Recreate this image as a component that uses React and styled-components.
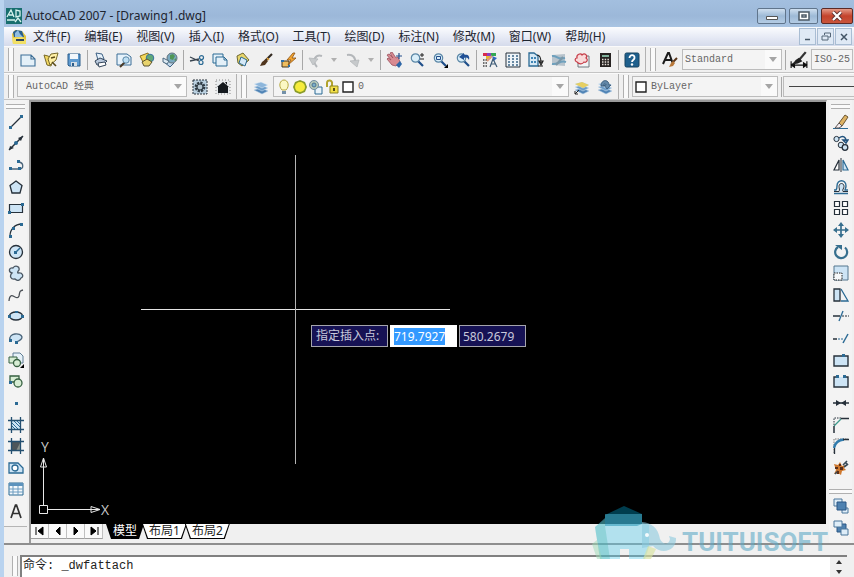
import React, { useEffect, useRef } from 'react';
import styled, { createGlobalStyle } from 'styled-components';

const menus = ['文件(F)', '编辑(E)', '视图(V)', '插入(I)', '格式(O)', '工具(T)', '绘图(D)', '标注(N)', '修改(M)', '窗口(W)', '帮助(H)'];

const B = '#2b6a94';
const L = '#cde4f5';
const K = '#26303a';

// standard toolbar, "|" is a separator and "v" a small drop arrow
const standardTools = [
    'new', 'open', 'save', '|', 'print', 'preview', 'publish', 'globe', '|',
    'cut', 'copy', 'paste', 'brush', 'matchBlock', '|', 'undo', 'v', 'redo', 'v', '|',
    'pan', 'zoomRealtime', 'zoomWindow', 'zoomPrevious', '|',
    'properties', 'designCenter', 'toolPalettes', 'sheetSet', 'markup', 'calculator', '|', 'help',
];

const drawTools = [
    'line', 'xline', 'polyline', 'polygon', 'rectangle', 'arc', 'circle', 'cloud', 'spline', 'ellipse',
    'ellipseArc', 'insertBlock', 'makeBlock', 'point', 'hatch', 'gradient', 'region', 'table', 'text',
];

const modifyTools = [
    'erase', 'copyObject', 'mirror', 'offset', 'array', 'move', 'rotate', 'scale', 'stretch',
    'trim', 'extend', 'breakPoint', 'break', 'join', 'chamfer', 'fillet', 'explode',
];

const orderTools = ['front', 'back'];

const lens = (
    <>
        <path d="M9 9l5 5" stroke="#1f4f8a" strokeWidth="2.2" />
        <circle cx="6.5" cy="6" r="4.2" fill="#d9eef9" stroke="#5b87a6" strokeWidth="1.2" />
    </>
);

const layers = (
    <>
        <path d="M1 11l7-2 7 3-6 3z" fill="#4f83b5" stroke="#b8d0e6" strokeWidth=".5" />
        <path d="M1 8l7-2 7 3-6 3z" fill="#6b9cc9" stroke="#d5e3f0" strokeWidth=".5" />
        <path d="M1 5l7-2 7 3-6 3z" fill="#8db6db" stroke="#e5eef6" strokeWidth=".5" />
    </>
);

const frameHash = <path d="M3.5 0v16M12.5 0v16M0 3.5h16M0 12.5h16" stroke="#234f70" strokeWidth="1.3" />;

const icons = {
    app: (
        <>
            <rect width="16" height="16" fill="#176e6e" />
            <path d="M1 9l4-7 3 7M3 7h4M10 2v7l4-1V3zM1 12h8M9 14l3-4 3 4" fill="none" stroke="#d8f3ee" strokeWidth="1.3" />
        </>
    ),
    doc: (
        <>
            <path d="M1 5l3-4 7 1 4 5v8H2z" fill="#e3c53c" />
            <path d="M2 3l3-2 6 1 2 6H3z" fill="#285e8e" />
            <path d="M4 4l3-3 2 4 3 3H4z" fill="#8fbde0" />
            <path d="M1 9l10-1 4 3v4H2z" fill="#f1df66" />
            <path d="M5 10h8v2H5z" fill="#2b435f" />
        </>
    ),
    new: <path d="M1 3h10l4 4v7H1zM11 3v4h4" fill="#e4f0f8" stroke="#3d6f97" strokeWidth="1.1" />,
    open: (
        <>
            <path d="M1 3l4 1 5 3-2 7-4-1z" fill="#f3d862" stroke="#77692a" />
            <path d="M5 7l3-5 7-1-2 7-6 5z" fill="#fff0a6" stroke="#77692a" />
            <path d="M8 6l4-1M9 10l4 4" stroke="#5c4c1a" strokeWidth="1.600" />
        </>
    ),
    save: (
        <>
            <path d="M2 2h12v12H3l-1-1z" fill="#5f9bd0" stroke="#2b5c8a" />
            <path d="M4 2h8v5H4z" fill="#f3f8fc" />
            <path d="M5 10h6v4H5z" fill="#d6dfe6" />
            <path d="M6 11h2v3H6z" fill="#2b5c8a" />
        </>
    ),
    print: (
        <>
            <path d="M3 1l6 1 2 5-6 1z" fill="#e6f2fb" stroke="#3f6285" />
            <path d="M2 9l5-3 7 3-4 4H4z" fill="#b9c9dd" stroke="#34465a" />
            <path d="M5 11l7-1 1 3-7 2z" fill="#fff" stroke="#34465a" />
        </>
    ),
    preview: (
        <>
            <path d="M1 2h10l4 3v8H1z" fill="#e6f2fb" stroke="#3d6f97" />
            <path d="M9 10l-5 5" stroke="#4a3a28" strokeWidth="2" />
            <circle cx="10" cy="8" r="3.200" fill="#bfe0f4" stroke="#5b87a6" />
        </>
    ),
    publish: (
        <>
            <path d="M1 4l8-3 2 6-7 3z" fill="#f5d95a" stroke="#8a6f22" />
            <circle cx="11" cy="6" r="3.800" fill="#5fa878" stroke="#3872a0" />
            <path d="M3 10l5-3 5 3-3 4H5z" fill="#e8d36c" stroke="#5b5330" />
        </>
    ),
    globe: (
        <>
            <path d="M1 9l7 6 4-4" fill="#bed6e9" stroke="#3f6285" />
            <circle cx="10" cy="6" r="5" fill="#79a9bf" stroke="#62727d" />
            <path d="M8 3l3-1 2 2-2 4-3-1zM12 8l2-2v3z" fill="#4f9656" />
            <path d="M1 6l6 3-2 3-4-2z" fill="#dce9f2" stroke="#4c6980" />
        </>
    ),
    cut: (
        <>
            <path d="M1 5l9 4M1 9l9-2" stroke="#38444f" strokeWidth="1.3" />
            <circle cx="12.5" cy="5.6" r="2" fill="none" stroke={B} strokeWidth="1.2" />
            <circle cx="12" cy="10.5" r="2" fill="none" stroke={B} strokeWidth="1.2" />
        </>
    ),
    copy: (
        <>
            <path d="M1 2h10v9H1z" fill="#e4f0f8" stroke={B} />
            <path d="M4 5h8l3 3v6H4zM12 5v3h3" fill="#e4f0f8" stroke={B} />
        </>
    ),
    paste: (
        <>
            <path d="M2 4l6-3 6 7-7 6-4-3z" fill="#e8d66b" stroke="#6f6830" />
            <path d="M6 5l6 3-2 6-6-3z" fill="#d5e9f7" stroke={B} />
        </>
    ),
    brush: (
        <>
            <path d="M14 2l-7 7" stroke="#332a20" strokeWidth="2.2" />
            <path d="M8 7l2 2-3 4-5 1 2-4z" fill="#50351d" />
            <path d="M9 6l2 2" stroke="#e5a43a" strokeWidth="1.6" />
        </>
    ),
    matchBlock: (
        <>
            <path d="M1 9h7v6H1z" fill="#efbd5e" stroke="#3e3423" />
            <path d="M12 1L6 8h4l-3 5 8-7h-4l3-5z" fill="#f2a531" stroke="#8c5215" strokeWidth=".8" />
            <path d="M0 8h3v2H0zM7 13h2v2H7z" fill="#2b6fa8" />
        </>
    ),
    undo: (
        <>
            <path d="M9 15C3 8 8 2 14 4" stroke="#b4b7ba" strokeWidth="2" />
            <path d="M1 6l9 1-5 6z" fill="#c6c9cb" stroke="#b4b7ba" strokeWidth=".8" />
        </>
    ),
    redo: (
        <>
            <path d="M2 3c6-1 9 3 8 8" stroke="#b4b7ba" strokeWidth="2" />
            <path d="M5 9l9-1-2 7z" fill="#c6c9cb" stroke="#b4b7ba" strokeWidth=".8" />
        </>
    ),
    pan: (
        <>
            <path d="M1 3l2-1 4 4-3-5 2-1 4 6 2-1 2 5-4 4-4-1-5-6 1-1 3 2z" fill="#d88a91" stroke="#9b4f5c" strokeWidth=".8" />
            <path d="M13 1v6M10 4h6" stroke="#254f8c" strokeWidth="1.2" />
            <path d="M10 13l4-4 2 3-3 4z" fill="#2e67a7" />
        </>
    ),
    zoomRealtime: <>{lens}<path d="M13 1v4M11 3h4M11 7h4" stroke="#222" /></>,
    zoomWindow: <>{lens}<path d="M4.500 4.500h4v3h-4z" fill="none" stroke="#254f8c" /><path d="M16 12v4h-4z" fill="#000" /></>,
    zoomPrevious: <>{lens}<path d="M4 5l5-4v2c4-1 6 1 5 5-1-2-2-3-5-2v2z" fill="#204f95" /></>,
    properties: (
        <>
            <path d="M1 1h4v3H1z" fill="#d62b4d" />
            <path d="M5 1h4v3H5z" fill="#8c3fc2" />
            <path d="M9 1h5v3H9z" fill="#34a853" />
            <path d="M4 4h5v3H4z" fill="#eab72d" />
            <path d="M10 4l5 2-3 3z" fill="#3268c5" />
            <path d="M1 8h4M1 11h4M1 14h4" stroke="#444" strokeWidth="1.4" strokeDasharray="1.500 1" />
            <path d="M8 15l3-8 4 8M9 12h5" stroke="#3c5a75" strokeWidth="1.2" fill="none" />
            <path d="M5 9l5-5" stroke="#dd9a7c" strokeWidth="2" />
        </>
    ),
    designCenter: (
        <>
            <path d="M1 1h14v14H1z" fill="#eef4f8" stroke={K} />
            <path d="M3 4h2m2 0h2m2 0h2M3 7h2m2 0h2m2 0h2M3 10h2m2 0h2m2 0h2M3 13h2m2 0h2m2 0h2" stroke="#3b6686" strokeWidth="1.700" />
        </>
    ),
    toolPalettes: (
        <>
            <path d="M1 1h5l4 3v10H1z" fill="#d6e8f4" stroke={B} strokeWidth="1.300" />
            <path d="M3 5h2v2H3zM6 5h2v2H6zM3 9h2v2H3zM6 9h2v2H6z" fill="#3f85b5" />
            <path d="M9 3c3 0 4 3 4 8M11 9h4l-2 4z" stroke="#222" strokeWidth="1.200" />
            <path d="M10 14h5" stroke="#222" />
        </>
    ),
    sheetSet: (
        <>
            <path d="M1 3l13-1v12L1 13z" fill="#b7c3cc" />
            <path d="M1 4c5-1 5 4 13 2M1 12c6 1 8-4 14-2" stroke="#6da0bd" strokeWidth="2" fill="none" />
            <path d="M5 13l7-8" stroke="#7c98a8" strokeWidth="2" />
        </>
    ),
    markup: (
        <>
            <path d="M4 4h11v11H4z" fill="#f1f4f6" stroke="#71787e" />
            <path d="M3 10c-3-1-2-4 0-4-1-4 4-5 5-3 3-3 6 1 4 3 3 2 0 5-2 4-2 3-5 2-7 0z" fill="#f9dada" stroke="#c63d48" strokeWidth="1.2" />
        </>
    ),
    calculator: (
        <>
            <path d="M3 1h11v14H3z" fill="#262220" />
            <path d="M5 3h7v2H5z" fill="#7fb09a" />
            <path d="M5 7.500h7M5 10h7M5 12.500h7" stroke="#e7e1db" strokeWidth="1.5" strokeDasharray="1.500 1.200" />
        </>
    ),
    help: (
        <>
            <rect x="1" y="1" width="14" height="14" rx="1.500" fill="#1f608d" stroke="#164361" />
            <path d="M5.500 6c0-4 5.500-3.500 5 0-.3 2-2.500 2-2.500 4" fill="none" stroke="#fff" strokeWidth="1.800" />
            <circle cx="8" cy="12.500" r="1.200" fill="#fff" />
        </>
    ),
    textStyle: (
        <>
            <path d="M1 12L6 1h1l4 11M3 8h6" fill="none" stroke="#1b1b1b" strokeWidth="2" />
            <path d="M15 6l-4 4" stroke="#5a3418" strokeWidth="2" />
            <path d="M11 9l2 2-2 3-4 1 2-4z" fill="#b87839" />
        </>
    ),
    dimStyle: (
        <>
            <path d="M1 9v6M15 9v6M1 12.500h14M1 12.500l3-2v4zM15 12.500l-3-2v4z" fill="#111" stroke="#111" />
            <path d="M14 1L8 8" stroke="#333" strokeWidth="2" />
            <path d="M8 6l3 3-4 2-5 1 3-4z" fill="#222" />
        </>
    ),
    gear: (
        <>
            <path d="M1 1h14v14H1z" fill="#b9cfdf" stroke={K} strokeDasharray="2 1" />
            <circle cx="8" cy="8" r="4" fill="none" stroke="#303c45" strokeWidth="2.800" strokeDasharray="2.100 1" />
            <circle cx="8" cy="8" r="3" fill="#b4c6d2" stroke="#303c45" strokeWidth="1.200" />
        </>
    ),
    home: (
        <>
            <path d="M1 1h14v14H1z" fill="#e8ebed" stroke="#888" strokeDasharray="1 2" />
            <path d="M2 8l6-5 6 5h-1v6H3V8z" fill="#14191e" />
            <path d="M10 3h2v3" fill="#14191e" />
        </>
    ),
    layers,
    layerCurrent: <>{layers}<path d="M1 5l7-2 7 3-6 3z" fill="#e6cf62" /><path d="M1 15l4-4M1 12v3h3" fill="none" stroke="#222" /></>,
    layerPrevious: <>{layers}<path d="M4 7c0-7 8-7 8-1h2l-4 4-3-4h2c0-2-3-2-2 1z" fill="#6287a8" stroke="#365775" strokeWidth=".8" /></>,
    bulb: (
        <>
            <path d="M6 11C2 7 4 1 8 1s6 6 2 10z" fill="#fbf8c4" stroke="#b5a83f" />
            <path d="M6 12h4v3H6z" fill="#7390a8" />
        </>
    ),
    sun: (
        <>
            <path d="M8 1l5 2 2 5-2 5-5 2-5-2-2-5 2-5z" fill="#8a9c2a" />
            <circle cx="8" cy="8" r="5" fill="#f6ec3b" />
        </>
    ),
    freeze: (
        <>
            <path d="M7 8h7v7H7z" fill="#e9f3fa" stroke={B} />
            <circle cx="6" cy="6" r="4.500" fill="#b5c9b8" stroke="#748da2" />
            <circle cx="6" cy="6" r="2" fill="#7bb0cb" stroke="#4f7390" />
        </>
    ),
    unlock: (
        <>
            <path d="M3 8V4c0-4 6-3 5 1v3" fill="none" stroke="#b1a32c" strokeWidth="2" />
            <path d="M6 7h8v7H6z" fill="#f2e047" stroke="#8d8424" />
            <path d="M10 9v3" stroke="#575019" strokeWidth="2" />
        </>
    ),
    swatch: <path d="M3 3h10v10H3z" fill="#fff" stroke="#222" strokeWidth="1.400" />,
    line: <><path d="M2 14L14 2" stroke={K} strokeWidth="1.200" /><path d="M1 12h3v3H1zM12 1h3v3h-3z" fill={B} /></>,
    xline: <><path d="M1 15L15 1" stroke={K} strokeWidth="1.500" /><path d="M2 11l4 2-5 2zM10 3l5-2-2 5z" fill={K} /><circle cx="8" cy="8" r="2" fill={B} /></>,
    polyline: <><path d="M2 12h9c5 0 5-6 0-7" fill="none" stroke="#4a647a" strokeWidth="1.300" /><path d="M1 10h3v3H1zM10 10h3v3h-3zM9 3h3v3H9z" fill={B} /></>,
    polygon: <path d="M8 2l6 4.500L12 14H4L2 6.500z" fill={L} stroke={K} strokeWidth="1.300" />,
    rectangle: <><path d="M1.500 4.500h13v8h-13z" fill={L} stroke={K} strokeWidth="1.200" /><path d="M0 11h3v3H0zM13 3h3v3h-3z" fill={B} /></>,
    arc: <><path d="M2 14C2 7 7 2 14 2" fill="none" stroke={K} strokeWidth="1.300" /><path d="M1 13h3v3H1zM4 5h3v3H4zM12 1h3v3h-3z" fill={B} /></>,
    circle: <><circle cx="8" cy="8" r="6.500" fill={L} stroke={K} strokeWidth="1.300" /><path d="M8 8l4-4" stroke={B} strokeWidth="1.500" /><path d="M6 7h3v3H6z" fill={B} /></>,
    cloud: <path d="M4 8C0 7 1 2 5 3c2-3 7-2 6 2-1 1-2 2-1 3 5-1 6 4 3 5-2 4-5 2-6 1-4 1-6-3-3-6z" fill={L} stroke="#4a5662" strokeWidth="1.300" />,
    spline: <path d="M1 14c1-12 8 1 10-5 1-4 0-5 4-6" fill="none" stroke="#4a4f55" strokeWidth="1.300" />,
    ellipse: <><ellipse cx="8" cy="8" rx="6.500" ry="4" fill={L} stroke={K} strokeWidth="1.300" /><path d="M0 7h3v3H0zM13 7h3v3h-3zM7 3h3v2H7z" fill={B} /></>,
    ellipseArc: <><path d="M2 10C0 3 13 2 14 7c0 3-3 4-6 5" fill={L} stroke="#4a647a" strokeWidth="1.300" /><path d="M1 9h3v3H1zM7 11h3v3H7z" fill={B} /></>,
    insertBlock: (
        <>
            <path d="M5 1h7l3 3v7H5z" fill="#e6f1f8" stroke="#5e7d94" />
            <path d="M1 5h8v6H1z" fill="#d7edd4" stroke="#366040" />
            <circle cx="9" cy="11" r="3.500" fill="#d7edd4" stroke="#366040" strokeWidth="1.300" />
            <path d="M16 12v4h-4z" fill="#000" />
        </>
    ),
    makeBlock: <><path d="M2 3h9v6H2z" fill="#d7edd4" stroke="#366040" strokeWidth="1.300" /><circle cx="10" cy="10" r="4" fill="#d7edd4" stroke="#366040" strokeWidth="1.300" /><path d="M1 8h3v3H1z" fill={B} /></>,
    point: <path d="M7 7h3v3H7z" fill={B} />,
    hatch: <><path d="M4 4h8v8H4z" fill={L} /><path d="M4 6l6 6M6 4l6 6M4 9l3 3M9 4l3 3" stroke={B} />{frameHash}</>,
    gradient: <><path d="M3 3h10v10H3z" fill="#4d565a" /><path d="M13 3v10H8z" fill="#8a8f87" />{frameHash}</>,
    region: <><path d="M1 3h9l5 5v5H1z" fill={L} stroke={B} strokeWidth="1.300" /><circle cx="7" cy="8" r="3" fill="#fff" stroke={B} strokeWidth="1.300" /></>,
    table: <><path d="M1 2h14v12H1z" fill="#f5f9fc" stroke={B} /><path d="M1 2h14v3H1z" fill="#5d93bd" /><path d="M1 8h14M1 11h14M5 5v9M10 5v9" stroke="#6d9cc0" /></>,
    text: <path d="M3 15L7.500 2h1L13 15M5 10.500h6" fill="none" stroke="#333" strokeWidth="1.700" />,
    erase: <><path d="M0 14.500h15" stroke={B} /><path d="M6 9l6-8 3 2-6 9z" fill="#ddb263" stroke="#6b5631" /><path d="M6 9l3 3-3 2H2z" fill="#f6eef0" stroke="#5a5352" /></>,
    copyObject: (
        <>
            <circle cx="3.500" cy="4" r="2.600" fill={L} stroke={K} />
            <circle cx="8" cy="10" r="2.800" fill={L} stroke={K} />
            <circle cx="12" cy="12.500" r="2.800" fill={L} stroke={K} strokeWidth="1.300" />
            <path d="M6 3c4-3 7-1 7 3M10 5h5l-2 3z" fill="none" stroke="#21527d" strokeWidth="1.500" />
        </>
    ),
    mirror: <><path d="M6 3v10H1z" fill="#fff" stroke={K} strokeWidth="1.200" /><path d="M10 3v10h5z" fill={L} stroke={B} strokeWidth="1.200" /><path d="M8 1v14" stroke={K} /></>,
    offset: <><path d="M1 14.500h14M1 11h2c1-1 1-2 1-4 0-7 9-7 9 0 0 2-1 3-1 4h3" fill="none" stroke={B} strokeWidth="1.400" /><path d="M1 12.500h5c1-2 0-3 0-5 0-4 5-4 5 0 0 2-2 3-1 5h5" fill={L} stroke={K} /></>,
    array: <path d="M1.500 1.500h5v5h-5zM9.500 1.500h5v5h-5zM1.500 9.500h5v5h-5zM9.500 9.500h5v5h-5z" fill="#fff" stroke={K} strokeWidth="1.200" />,
    move: <><path d="M8 2v12M2 8h12" stroke="#376f8e" strokeWidth="1.700" /><path d="M8 0l3 4H5zM8 16l3-4H5zM0 8l4-3v6zM16 8l-4-3v6z" fill="#376f8e" /></>,
    rotate: <><path d="M12 3.500A6 6 0 1 1 5 3" fill="none" stroke="#376f8e" strokeWidth="2.200" /><path d="M2 1h7v5z" fill="#376f8e" /></>,
    scale: <><path d="M1 1h14v14H1z" fill={L} stroke="#55778e" /><path d="M1 8h8v7H1z" fill="#f6f8f9" stroke="#222" strokeDasharray="1.500 1" /></>,
    stretch: <><path d="M1 2h6v12H1z" fill={L} stroke={K} strokeWidth="1.300" /><path d="M8 2l7 12H8" fill="none" stroke={B} strokeWidth="1.300" /></>,
    trim: <><path d="M0 8h7" stroke={K} strokeWidth="1.500" /><path d="M9 8h7" stroke={K} strokeDasharray="2 1" /><path d="M6 13l4-10" stroke={B} strokeWidth="1.300" /></>,
    extend: <><path d="M0 9h4" stroke={K} strokeWidth="1.500" /><path d="M5 9h6" stroke={B} strokeDasharray="2 1" /><path d="M10 13l5-9" stroke={B} strokeWidth="1.500" /></>,
    breakPoint: <><path d="M1 4h14v10H1z" fill={L} stroke={K} strokeWidth="1.400" /><path d="M9 2h3v3H9z" fill={B} /></>,
    break: <><path d="M4 4H1v10h14V4h-3" fill={L} stroke={K} strokeWidth="1.400" /><path d="M3 2h3v3H3zM10 2h3v3h-3z" fill={B} /></>,
    join: <><path d="M0 8h16" stroke={K} strokeWidth="1.500" /><path d="M3 5l5 3-5 3zM13 5L8 8l5 3z" fill={K} /></>,
    chamfer: <><path d="M1 9l7-7" stroke="#3d9a8c" strokeWidth="1.300" /><path d="M1 8V1h7" fill="none" stroke={K} strokeDasharray="1.500 1" /><path d="M1 16V9M8 1.500h8" stroke={K} strokeWidth="1.500" /></>,
    fillet: <><path d="M1 15V1h14" fill="none" stroke="#777" strokeDasharray="1.500 1" /><path d="M1 10C2 5 5 2 11 1.500" stroke="#327cad" strokeWidth="2.300" /><path d="M1.500 16v-6M10 1.500h6" stroke={K} strokeWidth="1.300" /></>,
    explode: (
        <>
            <path d="M1 4l4 1 2-3 2 4 3-1-1 3 2 2-4 1-1 4-3-2-4 1 2-4z" fill="#ce782f" />
            <path d="M10 5l4-4M11 7l4-3M12 2l3 3M2 14l3-3" stroke="#394b58" strokeWidth="1.600" />
            <path d="M2 7h3v2H2zM7 7h3v3H7zM4 11h2v3H4zM6 4h2v2H6z" fill="#5a2f19" />
        </>
    ),
    front: <><path d="M1 1h8v7H1zM9 10h6v5H9z" fill="#deedf8" stroke="#4a769b" /><path d="M4 4h9v8H4z" fill="#4e81b0" stroke="#2a5784" /></>,
    back: <><path d="M4 4h9v8H4z" fill="#4e81b0" stroke="#2a5784" /><path d="M1 1h8v6H1zM8 9h7v6H8z" fill="#deedf8" stroke="#4a769b" /></>,
    first: <path d="M4 4v8M6 8l5-4v8z" fill="#000" stroke="#000" />,
    previous: <path d="M6 8l4-4v8z" fill="#000" stroke="#000" />,
    next: <path d="M10 8L6 4v8z" fill="#000" stroke="#000" />,
    last: <path d="M12 4v8M10 8L5 4v8z" fill="#000" stroke="#000" />,
};

const Glyph = ({ name, size = 16 }) => (
    <svg width={size} height={size} viewBox="0 0 16 16" fill="none" aria-hidden="true">{icons[name]}</svg>
);

const Caret = () => (
    <CaretBox><svg width="8" height="5" viewBox="0 0 8 5"><path d="M0 0h8L4 5z" fill="#a5a5a5" /></svg></CaretBox>
);

const ToolButtons = ({ names, size }) => names.map((name, index) => {
    if (name === '|') return <Separator key={index} />;
    if (name === 'v') {
        return (
            <DropButton key={index} aria-label="history">
                <svg width="6" height="4" viewBox="0 0 6 4"><path d="M0 0h6L3 4z" fill="#b0b0b0" /></svg>
            </DropButton>
        );
    }
    return <ToolButton key={index} aria-label={name}><Glyph name={name} size={size} /></ToolButton>;
});

const SideButtons = ({ names }) => names.map((name) => (
    <SideButton key={name} aria-label={name}><Glyph name={name} /></SideButton>
));

const DynamicInput = () => {
    const xRef = useRef(null);

    useEffect(() => {
        xRef.current.focus({ preventScroll: true });
        xRef.current.select();
    }, []);

    return (
        <Prompt>
            <PromptLabel htmlFor="insert-x">指定插入点:</PromptLabel>
            <CoordInput id="insert-x" ref={xRef} defaultValue="719.7927" $active />
            <CoordInput aria-label="Y" defaultValue="580.2679" />
        </Prompt>
    );
};

const Watermark = () => (
    <Brand>
        <svg width="91" height="57" viewBox="0 0 91 57" aria-hidden="true">
            <path d="M14 12l19-9 18 8v10l-5 2H14z" fill="#006f8e" fillOpacity=".55" />
            <path d="M14 15L4 24l5 32h20V46h9v10h16l4-12V22l-7-2v-9H14z" fill="#5ccdec" fillOpacity=".42" />
            <path d="M14 16L4 24l5 32h10l-5-33z" fill="#43b3a8" fillOpacity=".3" />
            <path d="M51 19c10 1 16 6 18 17 3 6 9 6 10 0l-1-3 7 2c1 12-14 18-23 8l-11 2z" fill="#8cc9dd" fillOpacity=".6" />
            <path d="M6 37l-5 4 5 15h5z" fill="#9ed9b5" fillOpacity=".5" />
            <path d="M57 43l8 3-5 10h-8z" fill="#d9e3a0" fillOpacity=".65" />
            <circle cx="56" cy="32" r="2" fill="#f4fbfd" />
        </svg>
        <span>TUITUISOFT</span>
    </Brand>
);

const App = () => (
    <>
        <GlobalStyle />
        <AppWindow>
            <TitleBar>
                <Glyph name="app" />
                <Title>AutoCAD 2007 - [Drawing1.dwg]</Title>
                <CaptionButton aria-label="minimize"><svg width="12" height="8" viewBox="0 0 12 8"><path d="M.5 4.500h11v3H.5z" fill="#fff" stroke="#555" /></svg></CaptionButton>
                <CaptionButton aria-label="maximize"><svg width="12" height="10" viewBox="0 0 12 10"><path d="M1 1h10v8H1zM4 4h4v2H4z" fill="#fff" stroke="#4c5966" strokeWidth="1.500" /></svg></CaptionButton>
                <CaptionButton aria-label="close" $close><svg width="12" height="10" viewBox="0 0 12 10"><path d="M2 1l8 8M10 1L2 9" stroke="#5d3030" strokeWidth="4" /><path d="M2 1l8 8M10 1L2 9" stroke="#fff" strokeWidth="2.200" /></svg></CaptionButton>
            </TitleBar>
            <MenuBar>
                <Glyph name="doc" />
                <MenuList>
                    {menus.map((menu) => <MenuItem key={menu}>{menu}</MenuItem>)}
                </MenuList>
                <MdiButton aria-label="minimize drawing"><svg width="8" height="8"><path d="M1 6.500h5" stroke="#456" strokeWidth="1.500" /></svg></MdiButton>
                <MdiButton aria-label="restore drawing"><svg width="10" height="9" fill="none"><path d="M3.500 3V1h6v4h-2M1 4h6v4H1z" stroke="#567" /></svg></MdiButton>
                <MdiButton aria-label="close drawing"><svg width="8" height="8"><path d="M1 1l6 6M7 1L1 7" stroke="#456" strokeWidth="1.500" /></svg></MdiButton>
            </MenuBar>

            <ToolRow>
                <ToolGroup>
                    <Grip />
                    <ToolButtons names={standardTools} />
                </ToolGroup>
                <ToolGroup $grow>
                    <Grip />
                    <ToolButton aria-label="text style"><Glyph name="textStyle" /></ToolButton>
                    <Combo $width={100}>
                        <select aria-label="text style name"><option>Standard</option></select>
                        <Caret />
                    </Combo>
                    <Separator />
                    <ToolButton aria-label="dimension style"><Glyph name="dimStyle" size={18} /></ToolButton>
                    <Combo $grow>
                        <select aria-label="dimension style name"><option>ISO-25</option></select>
                    </Combo>
                </ToolGroup>
            </ToolRow>
            <ToolRow>
                <ToolGroup>
                    <Grip />
                    <Combo $width={170} $inset={6}>
                        <select aria-label="workspace"><option>AutoCAD 经典</option></select>
                        <Caret />
                    </Combo>
                    <ToolButtons names={['gear', 'home']} />
                </ToolGroup>
                <ToolGroup $grow>
                    <Grip />
                    <ToolButton aria-label="layers"><Glyph name="layers" /></ToolButton>
                    <Combo $grow $inset={2}>
                        {['bulb', 'sun', 'freeze', 'unlock', 'swatch'].map((name) => <Glyph key={name} name={name} />)}
                        <select aria-label="layer"><option>0</option></select>
                        <Caret />
                    </Combo>
                    <ToolButtons names={['layerCurrent', 'layerPrevious']} />
                </ToolGroup>
                <ToolGroup>
                    <Grip />
                    <Combo $width={146}>
                        <Glyph name="swatch" />
                        <select aria-label="color"><option>ByLayer</option></select>
                        <Caret />
                    </Combo>
                    <Separator />
                    <LinetypeButton aria-label="linetype"><hr /></LinetypeButton>
                </ToolGroup>
            </ToolRow>

            <Workspace>
                <SideBar $short>
                    <SideGrip />
                    <SideButtons names={drawTools} />
                </SideBar>
                <DrawingArea>
                    <Canvas>
                        <Crosshair width="309" height="309" viewBox="0 0 309 309">
                            <path d="M0 154.500h309" stroke="#e4e4e4" />
                            <path d="M154.500 0v309" stroke="#b4b4b4" />
                        </Crosshair>
                        <DynamicInput />
                        <UcsIcon width="76" height="90" viewBox="0 -6 76 90">
                            <path d="M5.500 65V18M10 69.500h52M1.500 65.500h8v8h-8zM5.500 18l-3 9h6zM62 69.500l-9-3v6z" fill="none" stroke="#e8e8e8" />
                            <text x="3" y="12">Y</text>
                            <text x="63" y="75">X</text>
                        </UcsIcon>
                    </Canvas>
                    <TabStrip>
                        {['first', 'previous', 'next', 'last'].map((name) => (
                            <TabNav key={name} aria-label={name}><Glyph name={name} /></TabNav>
                        ))}
                        <LayoutTabs>
                            <LayoutTab $active><span>模型</span></LayoutTab>
                            <LayoutTab><span>布局1</span></LayoutTab>
                            <LayoutTab><span>布局2</span></LayoutTab>
                        </LayoutTabs>
                    </TabStrip>
                </DrawingArea>
                <SideBar>
                    <SideGrip />
                    <SideButtons names={modifyTools} />
                    <SideGrip $split />
                    <SideButtons names={orderTools} />
                </SideBar>
            </Workspace>

            <CommandPanel>
                <Grip />
                <CommandInput aria-label="command" defaultValue="命令: _dwfattach" />
                <ScrollButtons>
                    <button aria-label="scroll up"><svg width="6" height="4"><path d="M0 4h6L3 0z" fill="#333" /></svg></button>
                    <button aria-label="scroll down"><svg width="6" height="4"><path d="M0 0h6L3 4z" fill="#333" /></svg></button>
                </ScrollButtons>
            </CommandPanel>
            <Watermark />
        </AppWindow>
    </>
);

const uiFont = '"Noto Sans", "Noto Sans CJK SC", sans-serif';
const monoFont = '"Liberation Mono", "Noto Sans CJK SC", monospace';

const GlobalStyle = createGlobalStyle`
    * {
        box-sizing: border-box;
    }
    body {
        margin: 0;
        font: 12px ${uiFont};
        color: #1d2530;
    }
    button, select, input {
        margin: 0;
        padding: 0;
        border: none;
        background: none;
        border-radius: 0;
        font: inherit;
        color: inherit;
        outline: none;
    }
    svg {
        display: block;
        flex: none;
    }
`;

const AppWindow = styled.div`
    position: relative;
    display: flex;
    flex-direction: column;
    min-height: 100vh;
    border-left: 4px solid #b9d3ef;
    background: #f0f0f0;
    overflow: hidden;
`;

const TitleBar = styled.header`
    display: flex;
    align-items: center;
    gap: 3px;
    height: 27px;
    margin-left: -4px;
    padding: 4px 1px 0 6px;
    background: linear-gradient(#a3bfdf, #9cb8d9 60%, #a9c4e2);
`;

const Title = styled.h1`
    flex: 1;
    margin: 0;
    font-size: 12px;
    font-weight: 400;
    line-height: 18px;
`;

const CaptionButton = styled.button`
    display: flex;
    align-items: center;
    justify-content: center;
    width: ${({ $close }) => ($close ? 32 : 29)}px;
    height: 16px;
    border: 1px solid ${({ $close }) => ($close ? '#5b2a26' : '#60758c')};
    border-radius: 2px;
    background: ${({ $close }) => ($close
        ? 'linear-gradient(#e39a87, #c4432c 50%, #c9553c)'
        : 'linear-gradient(#cfdfef, #9db9d6 50%, #b4cce4)')};
`;

const MenuBar = styled.nav`
    display: flex;
    align-items: center;
    height: 19px;
    padding: 0 2px 0 7px;
    background: linear-gradient(#fbfcfe, #e4e8f4 60%, #d5dbeb);
`;

const MenuList = styled.div`
    display: flex;
    flex: 1;
    gap: 14px;
    padding-left: 6px;
`;

const MenuItem = styled.button`
    line-height: 18px;
    white-space: nowrap;
`;

const MdiButton = styled.button`
    display: flex;
    align-items: center;
    justify-content: center;
    width: 17px;
    height: 17px;
    margin-left: 1px;
    border: 1px solid #a9bdd3;
    background: #dfe9f5;
`;

const ToolRow = styled.div`
    display: flex;
    height: 27px;
    border-top: 1px solid #fafafa;
    border-bottom: 1px solid #c4c4c4;
`;

const ToolGroup = styled.div`
    display: flex;
    flex: ${({ $grow }) => ($grow ? '1 1 0' : 'none')};
    align-items: center;
    min-width: 0;
    padding: 0 2px 0 4px;
    border-right: 1px solid #b2b2b2;

    &:last-child {
        padding-right: 0;
        border-right: none;
    }
`;

const Grip = styled.div`
    flex: none;
    align-self: stretch;
    width: 6px;
    margin: 1px 2px 1px 0;
    border: 1px solid #b0b0b0;
    border-width: 0 1px;
    background: #fafafa;
`;

const ToolButton = styled.button`
    display: flex;
    flex: none;
    align-items: center;
    justify-content: center;
    width: 23px;
    height: 23px;
`;

const DropButton = styled(ToolButton)`
    width: 14px;
`;

const Separator = styled.div`
    flex: none;
    width: 1px;
    height: 20px;
    margin: 0 1px 0 2px;
    background: #a8a8a8;
`;

const Combo = styled.div`
    display: flex;
    flex: ${({ $grow, $width }) => ($grow ? '1 1 0' : `0 0 ${$width}px`)};
    align-items: center;
    min-width: 0;
    height: 21px;
    margin: 0 1px;
    padding-left: ${({ $inset = 0 }) => $inset}px;
    border: 1px solid #bcbcbc;
    background: #f4f4f4;

    select {
        flex: 1;
        min-width: 0;
        height: 19px;
        padding-left: 2px;
        appearance: none;
        font: 10px ${monoFont};
        color: #666;
    }
`;

const CaretBox = styled.span`
    display: flex;
    align-items: center;
    justify-content: center;
    align-self: stretch;
    width: 16px;
    background: #fafafa;
    pointer-events: none;
`;

const LinetypeButton = styled.button`
    width: 71px;
    height: 21px;
    padding: 0 0 0 5px;
    border: 1px solid #bcbcbc;
    border-right: none;

    hr {
        margin: 0;
        border: none;
        border-top: 1px solid #444;
    }
`;

const Workspace = styled.main`
    display: flex;
    flex: 1;
    min-height: 443px;
`;

const SideBar = styled.aside`
    display: flex;
    flex: none;
    flex-direction: column;
    width: 23px;
    margin-bottom: ${({ $short }) => ($short ? 16 : 0)}px;
    padding-bottom: 4px;
    border-bottom: ${({ $short }) => ($short ? '1px solid #b5b5b5' : 'none')};
    background: #f3f3f3;

    &:last-child {
        margin-right: 2px;
    }
`;

const SideGrip = styled.div`
    flex: none;
    height: 5px;
    margin: ${({ $split }) => ($split ? '10px 0 2px' : '4px 2px 2px')};
    border: 1px solid #b0b0b0;
    border-width: 1px 0;
    background: #fafafa;
`;

const SideButton = styled.button`
    display: flex;
    flex: 1;
    align-items: center;
    justify-content: center;
    min-height: 0;
`;

const DrawingArea = styled.section`
    display: flex;
    flex: 1;
    flex-direction: column;
    min-width: 0;
    margin: 0 2px;
    border: 2px solid #9a9a9a;
    border-right: 1px solid #f0f0f0;
    border-bottom: none;
`;

const Canvas = styled.div`
    position: relative;
    flex: 1;
    background: #000;
`;

const Crosshair = styled.svg`
    position: absolute;
    left: 110px;
    top: 53px;
`;

const Prompt = styled.div`
    position: absolute;
    left: 280px;
    top: 223px;
    display: flex;
    gap: 2px;
    color: #c9c9dc;
`;

const PromptLabel = styled.label`
    width: 77px;
    height: 22px;
    padding-left: 4px;
    border: 1px solid #a5a5ac;
    background: #161254;
    line-height: 20px;
    white-space: nowrap;
`;

const CoordInput = styled.input`
    width: 67px;
    height: 22px;
    padding: 0 3px;
    border: 1px solid ${({ $active }) => ($active ? '#fff' : '#a5a5ac')};
    background: ${({ $active }) => ($active ? '#fff' : '#161254')};
    color: ${({ $active }) => ($active ? '#161254' : '#c9c9dc')};

    &::selection {
        background: #3399ff;
        color: #fff;
    }
`;

const UcsIcon = styled.svg`
    position: absolute;
    left: 7px;
    bottom: 0;

    text {
        font: 14px "Open Sans", sans-serif;
        fill: #c8c8c8;
    }
`;

const TabStrip = styled.div`
    display: flex;
    height: 15px;
    margin-bottom: 4px;
`;

const TabNav = styled.button`
    display: flex;
    align-items: center;
    justify-content: center;
    width: 18px;
    border-right: 1px solid #c0c0c0;
    border-bottom: 1px solid #a0a0a0;
    background: #fafafa;
`;

const LayoutTabs = styled.div`
    display: flex;
    padding-left: 3px;
`;

// black outline clipped to a trapezoid, the label span paints the inner face
const LayoutTab = styled.button`
    margin-right: -2px;
    padding: 0 1px 1px;
    background: #000;
    clip-path: polygon(0 0, 100% 0, calc(100% - 5px) 100%, 5px 100%);

    span {
        display: block;
        height: 14px;
        padding: 0 6px;
        background: ${({ $active }) => ($active ? '#000' : '#fff')};
        color: ${({ $active }) => ($active ? '#fff' : '#222')};
        line-height: 14px;
        clip-path: polygon(0 0, 100% 0, calc(100% - 5px) 100%, 5px 100%);
    }
`;

const CommandPanel = styled.footer`
    display: flex;
    flex: none;
    height: 34px;
    padding: 10px 7px 0 8px;
    border-top: 2px solid #8e8e8e;
`;

const CommandInput = styled.input`
    flex: 1;
    min-width: 0;
    padding: 0 1px 6px;
    border: 2px solid #808080;
    border-width: 2px 0 0 2px;
    background: #fff;
    font: 12px ${monoFont};
    color: #222;
`;

const ScrollButtons = styled.div`
    display: flex;
    flex-direction: column;
    width: 17px;
    border-top: 2px solid #808080;
    background: #f0f0f0;

    button {
        display: flex;
        flex: 1;
        align-items: center;
        justify-content: center;
    }
`;

const Brand = styled.div`
    position: absolute;
    right: 26px;
    bottom: 17px;
    display: flex;
    align-items: center;
    pointer-events: none;

    span {
        padding-top: 20px;
        font: 700 26px Roboto, sans-serif;
        color: rgba(96, 170, 199, 0.6);
    }
`;

export default App;
